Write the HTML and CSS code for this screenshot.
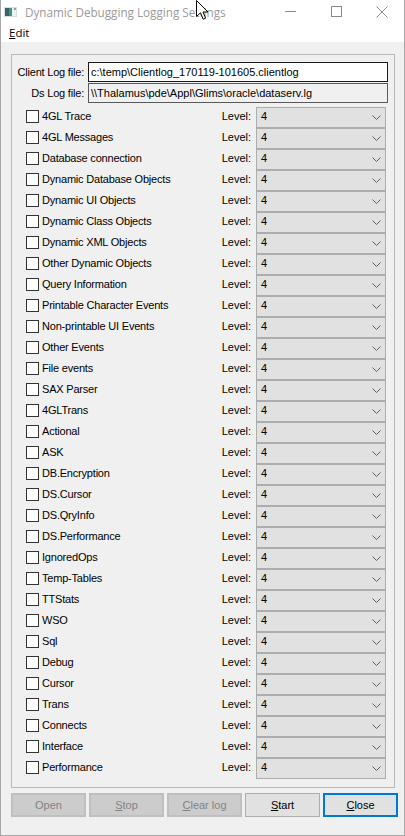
FILE: index.html
```html
<!DOCTYPE html>
<html>
<head>
<meta charset="utf-8">
<title>Dynamic Debugging Logging Settings</title>
<link rel="stylesheet" href="styles.css">
</head>
<body>
<div class="window">
  <div class="titlebar">
    <svg class="app-icon" width="13" height="10" viewBox="0 0 13 10">
      <rect x="0" y="0" width="13" height="10" fill="#d8dde0"/>
      <rect x="1" y="1" width="4" height="8" fill="#3d5f73"/>
      <rect x="5" y="1" width="3" height="8" fill="#3f9a6a"/>
      <rect x="8" y="1" width="4" height="8" fill="#eef1f2"/>
      <rect x="10" y="1" width="2" height="2" fill="#7aa6b8"/>
    </svg>
    <span class="title">Dynamic Debugging Logging Settings</span>
    <div class="caption-btns">
      <span class="cap-btn"><svg width="11" height="11" viewBox="0 0 11 11"><path d="M0 5.5H11" stroke="#8a8a8a" stroke-width="1"/></svg></span>
      <span class="cap-btn"><svg width="11" height="11" viewBox="0 0 11 11"><rect x="0.5" y="0.5" width="10" height="10" fill="none" stroke="#8a8a8a"/></svg></span>
      <span class="cap-btn"><svg width="12" height="12" viewBox="0 0 12 12"><path d="M0.5 0.5L11.5 11.5M11.5 0.5L0.5 11.5" stroke="#8a8a8a" stroke-width="1"/></svg></span>
    </div>
    <svg class="cursor" width="13" height="21" viewBox="0 0 13 21">
      <path d="M0.5 0.5 L0.5 16.5 L4.5 12.8 L7.2 19.2 L9.6 18.2 L7 12 L12 12 Z" fill="#fff" stroke="#000" stroke-width="1" stroke-linejoin="miter"/>
    </svg>
  </div>
  <div class="menubar"><span class="menu"><u>E</u>dit</span></div>
  <div class="client">
    <div class="group">
      <div class="paths">
        <span class="plabel">Client Log file:</span>
        <div class="field">c:\temp\Clientlog_170119-101605.clientlog</div>
        <span class="plabel">Ds Log file:</span>
        <div class="field ro">\\Thalamus\pde\Appl\Glims\oracle\dataserv.lg</div>
      </div>
      <div class="rows" id="rows"></div>
    </div>
    <div class="buttons">
      <span class="btn disabled">Open</span>
      <span class="btn disabled"><u>S</u>top</span>
      <span class="btn disabled"><u>C</u>lear log</span>
      <span class="btn"><u>S</u>tart</span>
      <span class="btn default"><u>C</u>lose</span>
    </div>
  </div>
</div>
<script>
var names = ["4GL Trace","4GL Messages","Database connection","Dynamic Database Objects","Dynamic UI Objects","Dynamic Class Objects","Dynamic XML Objects","Other Dynamic Objects","Query Information","Printable Character Events","Non-printable UI Events","Other Events","File events","SAX Parser","4GLTrans","Actional","ASK","DB.Encryption","DS.Cursor","DS.QryInfo","DS.Performance","IgnoredOps","Temp-Tables","TTStats","WSO","Sql","Debug","Cursor","Trans","Connects","Interface","Performance"];
var rows = document.getElementById("rows");
var html = "";
names.forEach(function(n){
  html += '<div class="row"><span class="cb"></span><span class="name">' + n + '</span><span class="lvl">Level:</span>' +
    '<div class="combo"><span class="val">4</span><svg class="chev" width="9" height="5" viewBox="0 0 9 5"><path d="M0.5 0.5 L4.5 4.5 L8.5 0.5" fill="none" stroke="#606060" stroke-width="1"/></svg></div></div>';
});
rows.innerHTML = html;
</script>
</body>
</html>
```

FILE: styles.css
```css
html, body {
  margin: 0;
  padding: 0;
  background: #f0f0f0;
}
.window {
  width: 405px;
  height: 836px;
  box-sizing: border-box;
  border: 1px solid #a7a7a7;
  border-top: none;
  background: #f0f0f0;
  display: flex;
  flex-direction: column;
  font-family: "Liberation Sans", Arial, sans-serif;
  font-size: 11px;
  color: #000;
}
.titlebar {
  position: relative;
  height: 23px;
  background: #fff;
  display: flex;
  align-items: center;
}
.app-icon {
  margin-left: 3px;
  margin-top: 1px;
}
.title {
  margin-left: 8px;
  font-family: "Open Sans", "Noto Sans", sans-serif;
  font-size: 11.7px;
  color: #9a9a9a;
  flex: 1;
}
.caption-btns {
  display: flex;
  height: 23px;
}
.cap-btn {
  width: 46px;
  display: flex;
  align-items: center;
  justify-content: center;
}
.cap-btn:last-child {
  width: 45px;
}
.cursor {
  position: absolute;
  left: 195px;
  top: 0;
}
.menubar {
  height: 19px;
  background: #fff;
  display: flex;
  align-items: center;
}
.menu {
  margin-left: 8px;
  font-family: "Open Sans", "Noto Sans", sans-serif;
  font-size: 11.5px;
}
.client {
  flex: 1;
  padding: 12px 0 0 10px;
  display: flex;
  flex-direction: column;
}
.group {
  width: 384px;
  height: 734px;
  box-sizing: border-box;
  border: 1px solid #b9b9b9;
  padding: 7px 8px 0 0;
}
.paths {
  display: grid;
  grid-template-columns: 72px 300px;
  column-gap: 4px;
  row-gap: 1px;
  align-items: center;
}
.plabel {
  text-align: right;
  white-space: nowrap;
  letter-spacing: -0.2px;
}
.field {
  height: 20px;
  box-sizing: border-box;
  border: 1px solid #1a1a1a;
  background: #fff;
  padding-left: 2px;
  display: flex;
  align-items: center;
  padding-bottom: 1px;
  white-space: nowrap;
}
.field.ro {
  background: #f0f0f0;
  border-color: #5a5a5a;
}
.rows {
  margin-top: 4px;
  display: flex;
  flex-direction: column;
}
.row {
  height: 21px;
  display: grid;
  grid-template-columns: 13px 1fr auto 130px;
  align-items: center;
  padding-left: 14px;
}
.cb {
  width: 13px;
  height: 13px;
  box-sizing: border-box;
  border: 1px solid #333;
  background: #fff;
  margin-top: -2px;
}
.name {
  margin-left: 3px;
  padding-bottom: 4px;
  white-space: nowrap;
  letter-spacing: -0.2px;
}
.lvl {
  margin-right: 5px;
  padding-bottom: 3px;
}
.combo {
  height: 21px;
  box-sizing: border-box;
  border: 1px solid #adadad;
  background: #e1e1e1;
  display: flex;
  align-items: center;
  justify-content: space-between;
  padding: 0 4px 3px 4px;
}
.chev {
  margin-top: 3px;
}
.buttons {
  margin-top: 5px;
  display: flex;
  gap: 3px;
}
.btn {
  width: 75px;
  height: 24px;
  box-sizing: border-box;
  border: 1px solid #adadad;
  background: #e1e1e1;
  display: flex;
  align-items: center;
  justify-content: center;
  padding-bottom: 1px;
}
.btn.disabled {
  background: #cccccc;
  border: 2px solid #bfbfbf;
  color: #838383;
}
.btn.default {
  border: 2px solid #0078d7;
}
```
